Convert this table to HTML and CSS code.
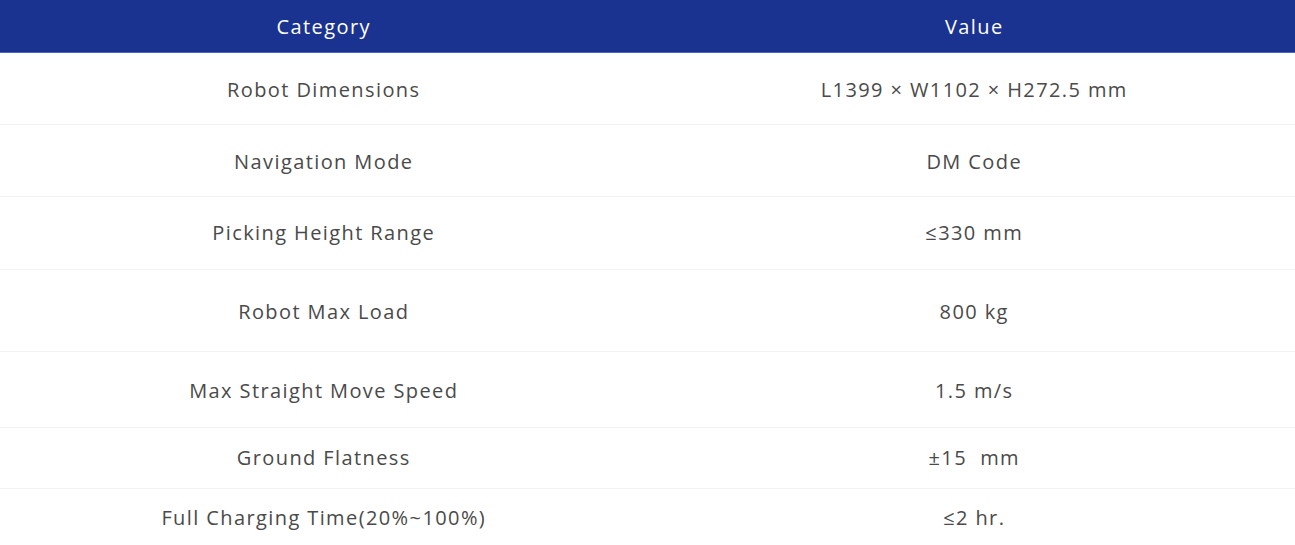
FILE: index.html
```html
<!DOCTYPE html>
<html>
<head>
<meta charset="utf-8">
<link rel="stylesheet" href="styles.css">
</head>
<body>
<table class="spec">
  <thead>
    <tr class="head"><th>Category</th><th class="val">Value</th></tr>
  </thead>
  <tbody>
    <tr class="r1"><td>Robot Dimensions</td><td class="val">L1399 × W1102 × H272.5 mm</td></tr>
    <tr class="r2"><td>Navigation Mode</td><td class="val">DM Code</td></tr>
    <tr class="r3"><td>Picking Height Range</td><td class="val">≤330 mm</td></tr>
    <tr class="r4"><td>Robot Max Load</td><td class="val">800 kg</td></tr>
    <tr class="r5"><td>Max Straight Move Speed</td><td class="val">1.5 m/s</td></tr>
    <tr class="r6"><td>Ground Flatness</td><td class="val">±15&nbsp; mm</td></tr>
    <tr class="r7"><td>Full Charging Time(20%~100%)</td><td class="val">≤2 hr.</td></tr>
  </tbody>
</table>
</body>
</html>
```
FILE: styles.css
```css
html, body {
  margin: 0;
  padding: 0;
  background: #ffffff;
}
.spec {
  width: 1295px;
  border-collapse: collapse;
  table-layout: fixed;
  font-family: "Open Sans", "DejaVu Sans", sans-serif;
}
.spec th, .spec td {
  padding: 3px 0 0 0;
  text-align: center;
  vertical-align: middle;
  width: 50%;
  letter-spacing: 1.4px;
}
.spec .val {
  padding-left: 6px;
}
.spec .head th {
  height: 52px;
  background: #1b3390;
  color: #ffffff;
  font-weight: 400;
  font-size: 20px;
  border-bottom: 1px solid #4a66c0;
  padding-top: 1px;
  box-sizing: border-box;
}
.spec td {
  color: #4a4a4a;
  font-size: 20px;
  border-bottom: 1px solid #f2f2f2;
}
.spec tr:last-child td { border-bottom: none; }
.r1 td { height: 68px; }
.r2 td { height: 68px; }
.r3 td { height: 72px; padding-top: 0; }
.r4 td { height: 78px; }
.r5 td { height: 72px; }
.r6 td { height: 60px; padding-top: 0; }
.r7 td { height: 57px; padding-top: 0; }
```
